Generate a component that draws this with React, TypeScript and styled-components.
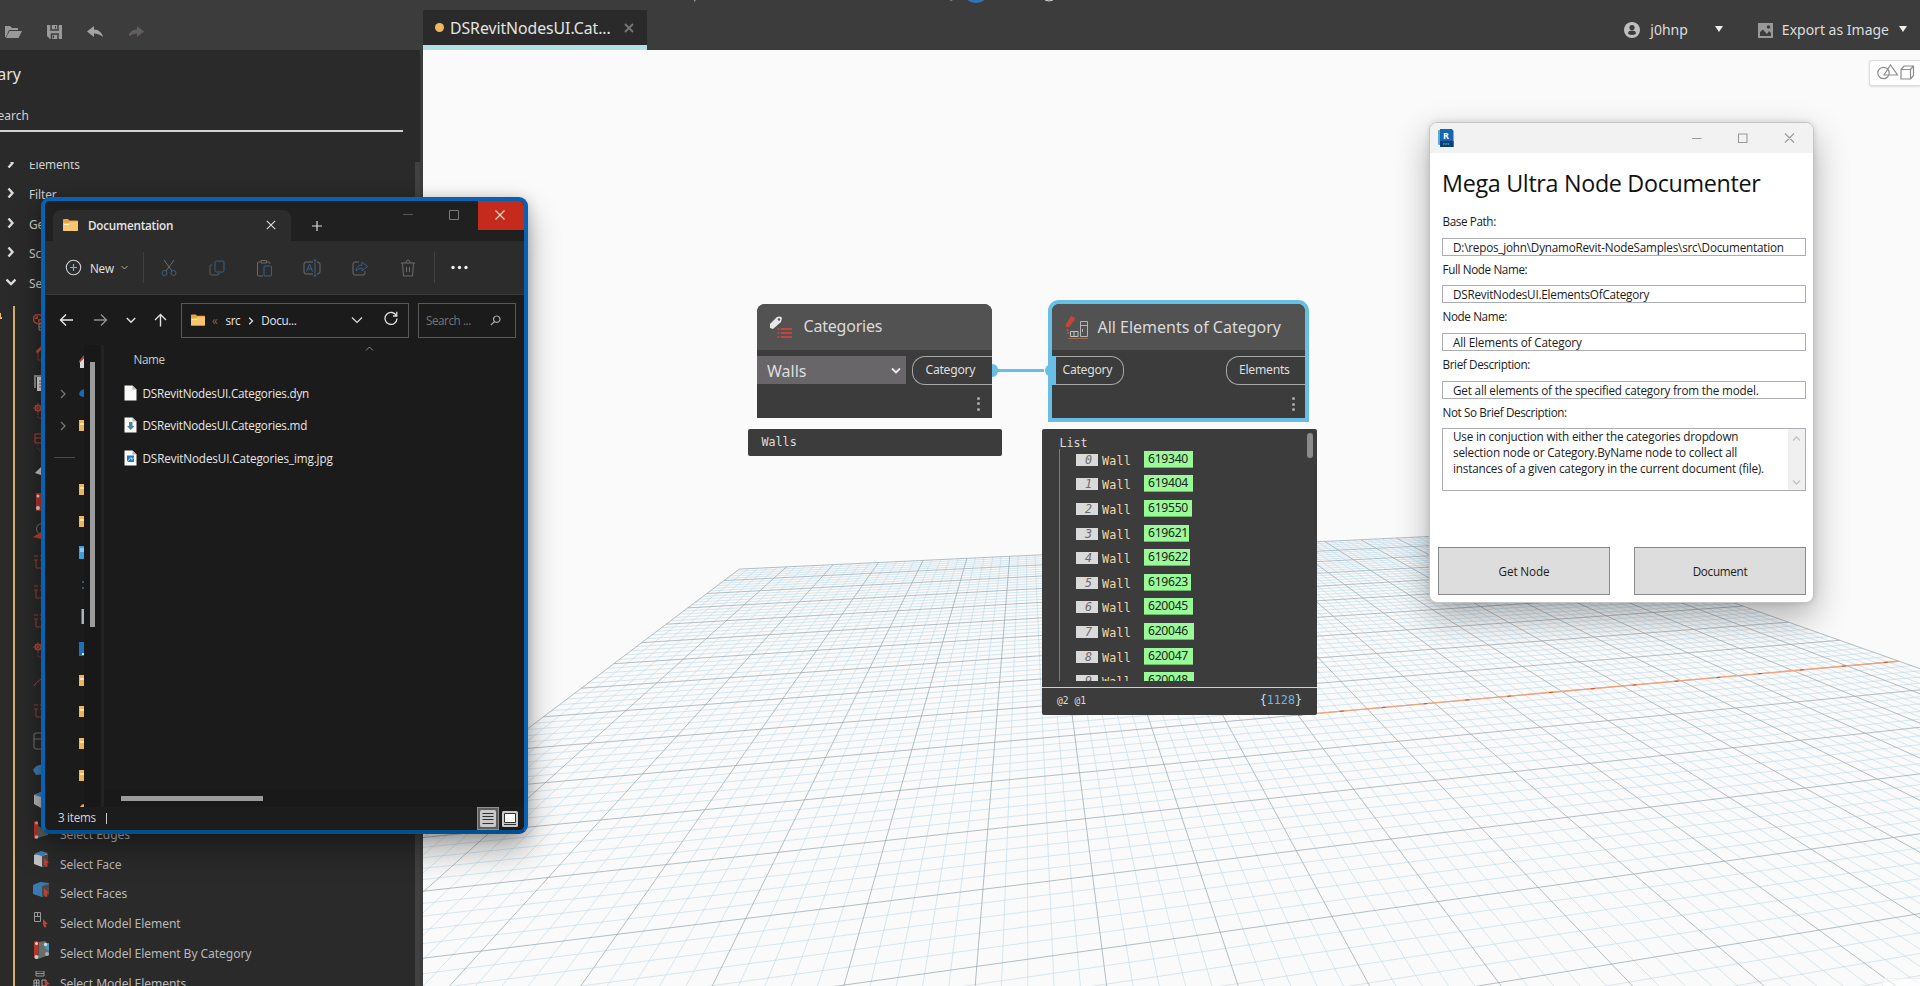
import React from "react";
import styled, { createGlobalStyle } from "styled-components";

const GlobalStyle = createGlobalStyle`
  html, body { margin: 0; padding: 0; background: #3c3c3c; overflow: hidden; }
  * { box-sizing: border-box; }
`;

const UI = `"Noto Sans", sans-serif`;
const WIN = `"Open Sans", "Noto Sans", sans-serif`;
const MONO = `"DejaVu Sans Mono", monospace`;

const Page = styled.div`
  position: relative;
  display: flex;
  flex-direction: column;
  width: 1920px;
  height: 986px;
  overflow: hidden;
  font-family: ${UI};
  background: #3c3c3c;
`;

/* ---------- top bar ---------- */
const TopBar = styled.header`
  display: flex;
  height: 50px;
  flex: none;
  background: #3c3c3c;
  position: relative;
`;
const TitleRemnant = styled.svg`
  position: absolute;
  left: 690px;
  top: 0;
`;
const Tools = styled.div`
  display: flex;
  align-items: flex-start;
  gap: 24px;
  width: 423px;
  padding: 24px 0 0 5px;
  svg { display: block; flex: none; }
`;
const DocTab = styled.div`
  display: flex;
  align-items: center;
  width: 224px;
  height: 40px;
  margin-top: 10px;
  padding: 0 13px 0 12px;
  border-bottom: 5px solid #b0e0e4;
  background: #2a2a2a;
  color: #e4e4e4;
  font-size: 15.8px;
  letter-spacing: -0.05px;
  white-space: nowrap;
`;
const Dot = styled.i`
  width: 9px;
  height: 9px;
  margin-right: 6px;
  border-radius: 50%;
  background: #f2b65f;
`;
const TabTitle = styled.span`flex: 1;`;
const Account = styled.div`
  display: flex;
  align-items: center;
  margin-left: auto;
  height: 60px;
  padding-right: 13px;
  color: #dcdcdc;
  font-size: 14px;
  white-space: nowrap;
`;
const AccountText = styled.span<{ $left: number; $right: number; $up?: number }>`
  padding: 0 ${p => p.$right}px ${p => p.$up ?? 0}px ${p => p.$left}px;
`;
const Triangle = styled.i<{ $gap?: number }>`
  border: 4px solid transparent;
  border-top: 6px solid #eee;
  border-bottom: 0;
  margin-right: ${p => p.$gap ?? 0}px;
  margin-bottom: 2px;
`;

/* ---------- library ---------- */
const Body = styled.div`
  display: flex;
  flex: 1;
  min-height: 0;
`;
const Sidebar = styled.aside`
  display: flex;
  flex-direction: column;
  width: 420px;
  margin-right: 3px;
  background: #2a2a2a;
  overflow: hidden;
`;
const CutLeft = styled.div<{ $w: number; $h: number; $line: number; $size: number; $color: string }>`
  display: flex;
  justify-content: flex-end;
  width: ${p => p.$w}px;
  height: ${p => p.$h}px;
  line-height: ${p => p.$line}px;
  font-size: ${p => p.$size}px;
  color: ${p => p.$color};
  overflow: hidden;
`;
const SearchLine = styled.div`
  width: 403px;
  height: 2px;
  background: #d2d2d2;
`;
const Scroller = styled.div`
  display: flex;
  flex: 1;
  min-height: 0;
  margin-top: 30px;
  overflow: hidden;
`;
const Tree = styled.div`
  flex: 1;
  margin-top: -12.5px;
`;
const SideScroll = styled.div`
  width: 5px;
  background: #414141;
`;
const Group = styled.div`
  display: flex;
  align-items: center;
  height: 29.7px;
  padding-left: 6px;
  gap: 13px;
  font-size: 11.9px;
  letter-spacing: -0.1px;
  color: #d0d0d0;
  svg { flex: none; position: relative; top: -1px; }
`;
const Branch = styled.div`
  display: flex;
  margin-top: 8.5px;
`;
const BranchRule = styled.div`
  width: 2px;
  margin-left: 10.5px;
  background: #d9ae6a;
`;
const BranchCaret = styled.i`
  width: 2px;
  height: 8px;
  margin-top: 5px;
  background: linear-gradient(75deg, #f2b65f 50%, transparent 50%);
`;
const Leaves = styled.div`
  padding: 5.6px 0 0 18.5px;
`;
const Leaf = styled.div`
  display: flex;
  align-items: center;
  gap: 9px;
  height: 29.85px;
  font-size: 12.1px;
  letter-spacing: -0.08px;
  white-space: nowrap;
  color: #b9b9b9;
  svg { flex: none; position: relative; top: -4px; }
`;

/* ---------- canvas ---------- */
const Canvas = styled.main`
  position: relative;
  width: 1497px;
  flex: none;
  background: #fafafa;
  overflow: hidden;
`;
const GridLayer = styled.svg`
  position: absolute;
  inset: 0;
`;
const ViewToggle = styled.div`
  position: absolute;
  right: 0;
  top: 10px;
  width: 51px;
  height: 26px;
  padding: 3px 0 0 7px;
  border: 1px solid #dedede;
  border-right: 0;
  border-radius: 3px 0 0 3px;
  background: #fff;
  box-shadow: 0 1px 2px rgba(0, 0, 0, .12);
`;
const NavHint = styled.div`
  position: absolute;
  right: 0;
  bottom: 0;
  width: 38px;
  height: 8px;
  border: 1px solid #f0f0f0;
  border-width: 1px 0 0 1px;
  border-radius: 3px 0 0 0;
  background: rgba(255, 255, 255, .5);
`;
const Node = styled.section<{ $x: number; $y: number; $w: number; $selected?: boolean }>`
  position: absolute;
  left: ${p => p.$x}px;
  top: ${p => p.$y}px;
  width: ${p => p.$w}px;
  border-radius: ${p => (p.$selected ? "11px 11px 0 0" : "8px 8px 0 0")};
  ${p => p.$selected && "border: 4px solid #68bfe6;"}
  background: #3c3c3c;
`;
const NodeHead = styled.div<{ $gap: number; $left: number }>`
  display: flex;
  align-items: center;
  gap: ${p => p.$gap}px;
  height: 46px;
  padding-left: ${p => p.$left}px;
  border-radius: 8px 8px 0 0;
  background: #525252;
  color: #dadada;
  font-size: 16px;
  white-space: nowrap;
  svg { flex: none; }
`;
const NodeTitle = styled.span<{ $ls: number }>`
  padding-bottom: 1px;
  letter-spacing: ${p => p.$ls}px;
`;
const Ports = styled.div`
  display: flex;
  justify-content: space-between;
  align-items: flex-start;
  padding-top: 6px;
  height: 40px;
`;
const PortBar = styled.i`
  width: 4px;
  height: 29px;
  background: #68bfe6;
`;
const InPorts = styled.div`display: flex;`;
const Port = styled.div<{ $w: number; $side: "in" | "out" }>`
  width: ${p => p.$w}px;
  height: 29px;
  line-height: 26px;
  border: 1px solid #a8a8a8;
  ${p => p.$side === "out"
    ? "border-right: 0; border-radius: 13px 0 0 13px; padding-left: 12.5px;"
    : "border-left: 0; border-radius: 0 13px 13px 0; padding-left: 6.5px;"}
  color: #dedede;
  font-size: 12.2px;
  letter-spacing: -0.28px;
`;
const Dropdown = styled.div`
  display: flex;
  align-items: center;
  justify-content: space-between;
  width: 149px;
  height: 28px;
  margin-top: 0.5px;
  padding: 1px 5px 0 10px;
  background: #686668;
  color: #dedede;
  font-size: 16px;
`;
const NodeFoot = styled.div<{ $right: number }>`
  display: flex;
  flex-direction: column;
  align-items: flex-end;
  gap: 2.5px;
  height: 28px;
  padding: 7px ${p => p.$right}px 0 0;
  i { width: 3px; height: 3px; border-radius: 50%; background: #a9a9a9; }
`;
const Wire = styled.svg`
  position: absolute;
  left: 569px;
  top: 310px;
`;
const Watch = styled.div<{ $x: number; $w: number }>`
  position: absolute;
  left: ${p => p.$x}px;
  top: 378.6px;
  width: ${p => p.$w}px;
  border-radius: 2px;
  background: #3c3c3c;
  color: #dcdcdc;
  font-family: ${MONO};
  font-size: 11.7px;
`;
const WatchValue = styled.div`
  height: 27px;
  line-height: 27.5px;
  padding-left: 14px;
`;
const WatchList = styled.div`
  position: relative;
  height: 252px;
  padding-left: 17px;
  overflow: hidden;
`;
const ListName = styled.div`
  height: 20px;
  line-height: 28px;
  padding-left: 0.5px;
`;
const ListRows = styled.div`
  height: 232px;
  border-left: 1px solid #7c7c7c;
  overflow: hidden;
`;
const ListRow = styled.div`
  display: flex;
  align-items: flex-start;
  height: 24.65px;
  padding: 2px 0 0 16px;
`;
const Index = styled.span`
  width: 22px;
  height: 12px;
  margin-top: 3px;
  padding-right: 6px;
  line-height: 12px;
  text-align: right;
  font-style: italic;
  background: #dadada;
  color: #6a6a6a;
`;
const TypeName = styled.span`
  width: 42px;
  margin-left: 4px;
  height: 23px;
  line-height: 20px;
  letter-spacing: 0.2px;
  color: #f3d9a4;
`;
const Id = styled.span<{ $w: number }>`
  width: ${p => p.$w}px;
  height: 17px;
  line-height: 15px;
  padding-left: 4px;
  border-bottom: 1px solid #6fb76f;
  background: #98fb98;
  color: #222;
  font-family: ${UI};
  font-size: 12.2px;
  letter-spacing: -0.3px;
`;
const ListThumb = styled.i`
  position: absolute;
  top: 4.5px;
  right: 4px;
  width: 6px;
  height: 25px;
  border-radius: 3px;
  background: #8b8b8b;
`;
const WatchFoot = styled.div`
  display: flex;
  justify-content: space-between;
  align-items: center;
  height: 28px;
  margin-top: 6px;
  padding: 0 15px 2px;
  border-top: 1px solid #cfcfcf;
  b { font-weight: 400; color: #6ab8e4; }
  small { font-size: 9.7px; }
`;

/* ---------- documenter dialog ---------- */
const Dialog = styled.section`
  position: absolute;
  left: 1429px;
  top: 122px;
  width: 385px;
  height: 481px;
  border: 1px solid #c4c4c4;
  border-radius: 8px;
  background: #fff;
  box-shadow: 0 14px 34px rgba(0, 0, 0, .3), 0 0 6px rgba(0, 0, 0, .12);
  font-family: ${WIN};
  font-size: 11.7px;
  letter-spacing: -0.22px;
  color: #1c1c1c;
  overflow: hidden;
`;
const DialogClip = styled.div`
  display: flex;
  flex-direction: column;
  height: 100%;
`;
const DialogBar = styled.div`
  display: flex;
  justify-content: space-between;
  height: 30px;
  padding: 5.5px 18px 0 7.5px;
  background: #f2f2f2;
`;
const DialogTitle = styled.h1`
  margin: 0;
  height: 55px;
  padding: 5px 0 0 12px;
  line-height: 51px;
  font-size: 23.3px;
  font-weight: 400;
  letter-spacing: -0.31px;
  color: #111;
  white-space: nowrap;
`;
const Field = styled.label`
  display: block;
  padding: 0 7px 0 12px;
`;
const FieldLabel = styled.span`
  display: block;
  height: 29.7px;
  line-height: 26.5px;
  padding-left: 0.5px;
  letter-spacing: -0.38px;
`;
const Input = styled.span<{ $ls?: number }>`
  display: block;
  height: 18px;
  line-height: 16.5px;
  padding-left: 10px;
  border: 1px solid #abadb3;
  letter-spacing: ${p => p.$ls ?? -0.2}px;
  white-space: nowrap;
`;
const TextArea = styled.span`
  display: flex;
  justify-content: space-between;
  height: 63px;
  padding-left: 10px;
  border: 1px solid #abadb3;
  line-height: 15.8px;
  letter-spacing: -0.18px;
  white-space: pre;
`;
const AreaScroll = styled.span`
  display: flex;
  flex-direction: column;
  justify-content: space-between;
  align-items: center;
  width: 17px;
  padding: 6px 0 4px;
  background: #f0f0f0;
`;
const Buttons = styled.div`
  display: flex;
  justify-content: space-between;
  margin-top: 56px;
  padding: 0 7px 0 8px;
`;
const PushButton = styled.div<{ $ls: number }>`
  width: 172px;
  height: 48px;
  line-height: 46px;
  border: 1px solid #8a8a8a;
  background: #ddd;
  text-align: center;
  letter-spacing: ${p => p.$ls}px;
`;

/* ---------- file explorer ---------- */
const Explorer = styled.section`
  position: absolute;
  left: 41px;
  top: 197px;
  width: 487px;
  height: 637px;
  border: 4px solid #0763b1;
  border-bottom-color: #04508f;
  border-radius: 9px;
  background: #1b1b1b;
  box-shadow: 0 16px 32px rgba(0, 0, 0, .32), 0 2px 14px rgba(0, 0, 0, .2);
  font-family: ${WIN};
  font-size: 11.7px;
  letter-spacing: -0.22px;
  color: #e6e6e6;
  white-space: nowrap;
`;
const ExplorerClip = styled.div`
  display: flex;
  flex-direction: column;
  height: 100%;
  border-radius: 5px;
  overflow: hidden;
`;
const TabStrip = styled.div`
  display: flex;
  height: 40px;
  flex: none;
  padding-left: 8px;
  background: #202020;
`;
const ExplorerTab = styled.div`
  display: flex;
  align-items: center;
  width: 238px;
  height: 31px;
  margin-top: 9px;
  padding: 0 15.5px 1.5px 10px;
  border-radius: 8px 8px 0 0;
  background: #2c2c2c;
  font-weight: 600;
  letter-spacing: -0.23px;
  span { flex: 1; margin-left: 10px; }
`;
const NewTab = styled.div`
  padding: 20px 0 0 21px;
  line-height: 0;
`;
const Caption = styled.div`
  display: flex;
  margin-left: auto;
  height: 29px;
`;
const CaptionButton = styled.div<{ $bg?: string }>`
  display: flex;
  align-items: center;
  justify-content: center;
  width: 46px;
  padding: 0 2px 1px 0;
  background: ${p => p.$bg ?? "transparent"};
`;
const CommandBar = styled.div`
  display: flex;
  align-items: center;
  height: 54px;
  flex: none;
  padding-left: 20px;
  border-bottom: 1px solid #3a3a3a;
  background: #2c2c2c;
`;
const NewLabel = styled.span`
  margin: 0 7px 0 8px;
  font-weight: 500;
`;
const Divider = styled.i<{ $l: number; $r: number }>`
  width: 1px;
  height: 31px;
  margin: 0 ${p => p.$r}px 0 ${p => p.$l}px;
  background: #404040;
`;
const Commands = styled.div`
  display: flex;
  gap: 29.8px;
  svg { display: block; }
`;
const AddressBar = styled.div`
  display: flex;
  align-items: center;
  height: 50px;
  flex: none;
  padding-left: 14px;
`;
const Arrows = styled.div`
  display: flex;
  align-items: center;
  gap: 18px;
  width: 122px;
`;
const PathBox = styled.div`
  display: flex;
  align-items: center;
  width: 228px;
  height: 35px;
  padding: 0 10.5px 1px 9px;
  border: 1px solid #585858;
  letter-spacing: -0.35px;
`;
const PathPart = styled.span<{ $l: number; $grow?: boolean; $c?: string }>`
  margin-left: ${p => p.$l}px;
  ${p => p.$grow && "flex: 1;"}
  color: ${p => p.$c ?? "#e6e6e6"};
`;
const SearchBox = styled.div`
  display: flex;
  align-items: center;
  justify-content: space-between;
  width: 98px;
  height: 35px;
  margin-left: 9px;
  padding: 0 14px 0 7px;
  border: 1px solid #585858;
  color: #757575;
  letter-spacing: -0.45px;
`;
const Panes = styled.div`
  display: flex;
  flex: 1;
  min-height: 0;
`;
const NavPane = styled.div`
  width: 39px;
  padding-left: 9px;
  overflow: hidden;
`;
const NavItem = styled.div<{ $h?: number }>`
  display: flex;
  align-items: center;
  height: ${p => p.$h ?? 31.8}px;
  width: 60px;
  svg { flex: none; }
`;
const NavChevron = styled.span`
  display: flex;
  width: 25px;
  padding-left: 5.5px;
`;
const NavRule = styled.i`
  width: 21px;
  height: 1px;
  background: #4a4a4a;
`;
const NavTrack = styled.div`
  width: 17px;
  padding: 17px 0 0 6px;
  background: #181818;
`;
const NavThumb = styled.div`
  width: 5px;
  height: 265px;
  background: #9b9b9b;
`;
const Splitter = styled.div`
  width: 3px;
  background: #232323;
`;
const FilePane = styled.div`
  display: flex;
  flex-direction: column;
  flex: 1;
`;
const HeadRow = styled.div`
  display: flex;
  height: 31.7px;
  padding-left: 29.5px;
  line-height: 28px;
  color: #c8c8c8;
  letter-spacing: -0.4px;
  span { width: 231px; }
`;
const FileRow = styled.div<{ $ls: number }>`
  display: flex;
  align-items: center;
  gap: 5.5px;
  height: 32.5px;
  padding-left: 20px;
  letter-spacing: ${p => p.$ls}px;
`;
const HTrack = styled.div`
  display: flex;
  height: 17px;
  margin-top: auto;
  padding: 6px 0 0 17px;
  background: #191919;
`;
const HThumb = styled.div`
  width: 142px;
  height: 5px;
  background: #9b9b9b;
`;
const StatusBar = styled.div`
  display: flex;
  align-items: center;
  height: 23px;
  flex: none;
  padding: 0 3.5px 0 13px;
  color: #d6d6d6;
  background: #1c1c1c;
  letter-spacing: -0.3px;
`;
const StatusText = styled.span`padding-bottom: 2.5px;`;
const StatusRule = styled.i`
  width: 1px;
  height: 11px;
  margin: 0 auto 0 10px;
  background: #c8c8c8;
`;
const ViewButton = styled.div<{ $on?: boolean }>`
  display: flex;
  align-items: center;
  justify-content: center;
  width: 22px;
  height: 23px;
  ${p => p.$on && "background: #5f5f5f; border: 1px solid #8f8f8f;"}
`;

/* ---------- glyphs ---------- */
const Stroke = ({ d, w, h, c, s = 1 }: { d: string; w: number; h: number; c: string; s?: number }) => (
  <svg width={w} height={h} viewBox={`0 0 ${w} ${h}`} fill="none" stroke={c} strokeWidth={s}>
    <path d={d} />
  </svg>
);

const Folder = ({ w = 15 }: { w?: number }) => (
  <svg width={w} height="12" viewBox="0 0 15 12">
    <path d="M0 1Q0 0 1 0H5L6.5 1.5H14Q15 1.5 15 2.5V11Q15 12 14 12H1Q0 12 0 11Z" fill="#e8a33f" />
    <path d="M0 4H5.5L7 2.6H15V11Q15 12 14 12H1Q0 12 0 11Z" fill="#f7c66f" />
    <path d="M1 5.5H6" stroke="#fff0cc" />
  </svg>
);

const FileIcon = ({ kind }: { kind: "plain" | "md" | "img" }) => (
  <svg width="13" height="16" viewBox="0 0 13 16">
    <path d="M.5.5H8.5L12.5 4.5V15.5H.5Z" fill="#fbfbf8" />
    <path d="M8.5.5V4.5H12.5Z" fill="#b5b5b5" />
    {kind === "md" && <path d="M5 5H8.5V9H10.5L6.7 13 3 9H5Z" fill="#4d7fa3" />}
    {kind === "img" && (
      <>
        <path d="M3 5.5H10V12H3Z" fill="#1f7ac6" />
        <path d="M3 12L7 7.5 8 9.5 10 7.5" stroke="#bfe3fa" fill="none" />
      </>
    )}
  </svg>
);

const LIB_ICONS: Record<string, React.ReactNode> = {
  globe: <><circle cx="5" cy="5" r="4.5" fill="none" stroke="#b8473a" strokeWidth="1.5" /><path d="M1 5H5V1M5 9V5H9" fill="#b8473a" /><path d="M6 10H10M6 13H10M6 10V16H10" stroke="#999" fill="none" /></>,
  roof: <><path d="M3 7L9 1V5L4 10Z" fill="#b8473a" /><path d="M5 9V16H10" stroke="#7a3c34" fill="none" /></>,
  page: <><path d="M1 1H12V3H3V14H1Z" fill="#8a8a8a" /><path d="M4 3H14V17H4Z" fill="#ddd" /><path d="M6 7H10M6 10H10M6 13H10" stroke="#a55" /></>,
  gear: <><circle cx="5" cy="5" r="2.8" fill="none" stroke="#b8473a" strokeWidth="1.5" /><path d="M5 0V10M0 5H10M2 2L8 8M8 2L2 8" stroke="#b8473a" strokeWidth=".7" /><path d="M5 10V15H10" stroke="#7a3c34" fill="none" strokeDasharray="2 1" /></>,
  table: <><path d="M2 1H9V10H2ZM2 5H9" stroke="#b8473a" fill="none" /><path d="M5 12V17H12" stroke="#7a3c34" fill="none" strokeDasharray="1 2" /></>,
  tag: <path d="M2 10L8 4H14L8 12Z" fill="#ccc" />,
  link: <><path d="M3 0H9V18H3Z" fill="#b8352a" /><circle cx="5" cy="3" r="1.5" fill="#ddd" /><circle cx="5" cy="15" r="2" fill="#ddd" /></>,
  pick: <><circle cx="9" cy="6" r="5.5" fill="none" stroke="#777" /><path d="M0 14L8 9V16Z" fill="#c2402f" /></>,
  grid: <path d="M1 3H5M7 3H14M1 7H5M7 7H14M3 7V15H12" stroke="#9a4336" fill="none" />,
  curve: <path d="M1 14Q6 6 14 6" stroke="#b8473a" fill="none" />,
  box: <path d="M1 3Q1 1 3 1H14V17H3Q1 17 1 15ZM1 7H14" stroke="#777" fill="none" />,
  surf: <path d="M0 8Q3 2 12 3L14 12 3 13Z" fill="#3f7fb5" />,
  cube: <><path d="M1 4L8 1 16 3V13L8 17 1 13Z" fill="#bcbcbc" /><path d="M1 4L8 1 16 3 8 6Z" fill="#3f7fb5" /></>,
  edges: <><path d="M1 1Q3-1 5 1L6 13 4 18 1 17Z" fill="#b8352a" /><path d="M5 5L15 10 15 14 4 17Z" fill="#5b625e" /><circle cx="3.500" cy="2" r="1.500" fill="#d99" /><circle cx="3.500" cy="16" r="1.800" fill="#bbb" /></>,
  face: <><path d="M1 4L8 1 15 3V14L9 16 1 13Z" fill="#c4c4c4" /><path d="M1 3L8 0 15 2 9 5Z" fill="#3f7fb5" /><path d="M9 5L15 3V14L9 16Z" fill="#4a4a4a" /><path d="M11 7L16 12 13.5 12 14.5 15.5 12.5 16 11 13Z" fill="#c2402f" /></>,
  faces: <><path d="M0 4L7 1 16 2V13L9 16 0 13Z" fill="#3a7ab3" /><path d="M9 5L16 3V14L9 16Z" fill="#4a4a4a" /><path d="M11 7L16 12 13.5 12 14.5 15.5 12.5 16 11 13Z" fill="#c2402f" /></>,
  model: <><path d="M1.500 1.500H7.500V10.500H1.500ZM1.500 5.500H7.500M4.500 1.500V5.500" stroke="#999" fill="none" /><path d="M10 8L15 13 12.500 13 13.500 16 11.500 16.500 10 13.500Z" fill="#c2402f" /></>,
  bycat: <><path d="M6 1L12 0 16 4V14L5 18Z" fill="#66706a" /><path d="M1 1Q3-1 6 1L5 12 3 18 1 17Z" fill="#b8352a" /><path d="M11 2H16V10L13 8Z" fill="#4b94c4" /><circle cx="3.500" cy="2.500" r="1.500" fill="#e6cfcb" /><circle cx="12.500" cy="3.500" r="1.700" fill="#bfe0f2" /><circle cx="3.500" cy="16" r="2" fill="#ccc" /><circle cx="14" cy="13" r="2" fill="#aaa" /></>,
  models: <><path d="M3 0H11V5H3ZM3 2.500H11" stroke="#999" fill="none" /><path d="M1 9H6V15H1ZM1 12H6M3.500 9V15M9 9H13V15H9Z" stroke="#aaa" fill="none" /><path d="M11 8L17 13 14 14 13 17Z" fill="#c2402f" /></>,
};

const LEAVES: [string, string?][] = [
  ["globe"], ["roof"], ["page"], ["gear"], ["table"], ["tag"], ["link"], ["pick"], ["grid"], ["grid"], ["grid"],
  ["gear"], ["curve"], ["grid"], ["box"], ["surf"], ["cube"],
  ["edges", "Select Edges"], ["face", "Select Face"], ["faces", "Select Faces"], ["model", "Select Model Element"],
  ["bycat", "Select Model Element By Category"], ["models", "Select Model Elements"],
];

const NAV_FOLDER = <><path d="M0 2H5V13H0Z" fill="#f0b357" /><path d="M1 5H5V7H1Z" fill="#fbe3b0" /></>;
const NAV_ITEMS: React.ReactNode[] = [
  <><path d="M1 8L5 4V14H1Z" fill="#d9d9d9" /><path d="M0 7L5 1V4L0 9Z" fill="#c8402f" /></>,
  <path d="M0 8Q1 4 5 3V11Q1 11 0 8Z" fill="#0f6cc0" />,
  NAV_FOLDER,
  null,
  NAV_FOLDER,
  NAV_FOLDER,
  <><path d="M0 1H5V14H0Z" fill="#3b9fdc" /><path d="M1 4H5M1 6H5" stroke="#d4ecf8" /></>,
  <path d="M3 5H5M3 11H5" stroke="#5a8fb5" />,
  <path d="M2.500 0H5V15H2.500Z" fill="#a9b4bd" />,
  <><path d="M0 1H5V15H0Z" fill="#1e6fc0" /><path d="M3 13H5" stroke="#d4ecf8" strokeWidth="2" /></>,
  NAV_FOLDER,
  NAV_FOLDER,
  NAV_FOLDER,
  NAV_FOLDER,
  <path d="M0 9Q2 4 5 4V14H0Z" fill="#e8a75a" />,
];

const IDS: [string, number][] = [
  ["619340", 48.5], ["619404", 48.5], ["619550", 48], ["619621", 45], ["619622", 46],
  ["619623", 47], ["620045", 49], ["620046", 50], ["620047", 48.5], ["620048", 50],
];

/* ---------- ground plane ---------- */
type Pair = [number, number];
const ANCHORS: [Pair, Pair][] = [
  [[0, 0], [740, 569]],
  [[6, 0], [1009.7, 556.3]],
  [[0, 3], [686.3, 608.3]],
  [[0, 8], [544, 716.3]],
  [[6, 14], [977, 966.7]],
  [[20, 7], [1743, 606]],
  [[20, 10], [1898.6, 661.3]],
];

/* Least-squares projective fit from plane cells to canvas pixels. */
function fitPlane(anchors: [Pair, Pair][]): number[] {
  const rows: number[][] = [];
  anchors.forEach(([[i, j], [x, y]]) => {
    const X = x / 1000, Y = y / 1000;
    rows.push([i, j, 1, 0, 0, 0, -i * X, -j * X, X]);
    rows.push([0, 0, 0, i, j, 1, -i * Y, -j * Y, Y]);
  });
  const m = Array.from({ length: 8 }, (_, a) =>
    Array.from({ length: 9 }, (_, b) => rows.reduce((sum, r) => sum + r[a] * r[b], 0)));
  for (let c = 0; c < 8; c++) {
    let p = c;
    for (let r = c + 1; r < 8; r++) if (Math.abs(m[r][c]) > Math.abs(m[p][c])) p = r;
    [m[c], m[p]] = [m[p], m[c]];
    for (let r = 0; r < 8; r++) {
      if (r === c) continue;
      const f = m[r][c] / m[c][c];
      for (let k = c; k < 9; k++) m[r][k] -= f * m[c][k];
    }
  }
  return m.map((r, a) => r[8] / r[a]);
}
const H = fitPlane(ANCHORS);
const depth = ([i, j]: Pair) => H[6] * i + H[7] * j + 1;
const project = (p: Pair): string => {
  const w = depth(p);
  const x = ((H[0] * p[0] + H[1] * p[1] + H[2]) / w) * 1000;
  const y = ((H[3] * p[0] + H[4] * p[1] + H[5]) / w) * 1000;
  return `${x.toFixed(1)} ${y.toFixed(1)}`;
};
function segment(a: Pair, b: Pair): string {
  const near = 0.08;
  const wa = depth(a), wb = depth(b);
  if (wa < near && wb < near) return "";
  const at = (t: number): Pair => [a[0] + (b[0] - a[0]) * t, a[1] + (b[1] - a[1]) * t];
  const cut = (near - wa) / (wb - wa);
  return `M${project(wa < near ? at(cut) : a)}L${project(wb < near ? at(cut) : b)}`;
}
const planeLines = (major: boolean) => {
  let d = "";
  for (let k = 0; k <= 100; k++) {
    if ((k % 5 === 0) !== major) continue;
    const v = k / 5;
    d += segment([v, 0], [v, 20]) + segment([0, v], [20, v]);
  }
  return d;
};

const Ground = () => (
  <GridLayer width="1497" height="936" viewBox="423 50 1497 936" fill="none">
    <path d={planeLines(false)} stroke="#bcd8e8" strokeOpacity=".6" />
    <path d={planeLines(true)} stroke="#9aa9b2" strokeOpacity=".75" />
    <path d={segment([10, 10], [20, 10])} stroke="#f2a27c" strokeWidth="1.4" />
    <path d={segment([10, 10], [20, 10])} stroke="#c8502c" strokeDasharray="4 38" />
  </GridLayer>
);

const Chevron = ({ open }: { open?: boolean }) => open
  ? <Stroke w={10} h={10} d="M.500 2.500L5 7 9.500 2.500" c="#dcdcdc" s={2.4} />
  : <Stroke w={10} h={10} d="M2.500 .500L6.500 5 2.500 9.500" c="#dcdcdc" s={2.4} />;

export default function App() {
  return (
    <Page>
      <GlobalStyle />
      <TopBar>
        <TitleRemnant width="370" height="4" viewBox="0 0 370 4">
          <path d="M4 0H6L4 2Z M260 0H263L261 1Z" fill="#999" />
          <ellipse cx="286" cy="-2" rx="9" ry="5" fill="#2f74b5" />
          <path d="M355 0Q359 2 363 0" stroke="#ddd" fill="none" />
        </TitleRemnant>
        <Tools>
          <svg width="18" height="16" viewBox="0 0 18 16" fill="#999"><path d="M0 13V2H5L7 4H13V6H4L1 13Z M4.500 7H17L13.500 14H1Z" /></svg>
          <svg width="16" height="16" viewBox="0 0 16 16"><path d="M0 1H15V15H3L0 12Z" fill="#999" /><path d="M4 1V6H11V1M4.500 15V10H11V15" stroke="#3c3c3c" strokeWidth="1.500" fill="none" /><path d="M8.500 2V4.500M6.500 11.500V14" stroke="#3c3c3c" /></svg>
          <svg width="18" height="16" viewBox="0 0 18 16"><path d="M0 7.500L7 2V5.500Q14 5.500 16 13Q12 9.500 7 9.500V13Z" fill="#a3a3a3" /></svg>
          <svg width="18" height="16" viewBox="0 0 18 16"><path d="M15 7.500L8 2V5.500Q1 5.500 -1 13Q3 9.500 8 9.500V13Z" fill="#625e5e" /></svg>
        </Tools>
        <DocTab>
          <Dot />
          <TabTitle>DSRevitNodesUI.Cat...</TabTitle>
          <Stroke w={10} h={10} d="M1 1L9 9M9 1L1 9" c="#777" s={1.8} />
        </DocTab>
        <Account>
          <svg width="16" height="16" viewBox="0 0 16 16"><circle cx="8" cy="8" r="8" fill="#bfbfbf" /><circle cx="8" cy="5.500" r="2.600" fill="#3c3c3c" /><path d="M4.200 12V10.500Q4.500 8.500 8 8.500Q11.500 8.500 11.800 10.500V12Q8 14 4.200 12Z" fill="#3c3c3c" /></svg>
          <AccountText $left={10} $right={27} $up={2}>j0hnp</AccountText>
          <Triangle $gap={35} />
          <svg width="15" height="15" viewBox="0 0 15 15"><path d="M0 0H15V15H0Z" fill="#999" /><path d="M2 13V9L5 6.500 7.500 9.500 9 11 11 8 13 10V13Z" fill="#3c3c3c" /><circle cx="10.500" cy="4" r="1.800" fill="#3c3c3c" /></svg>
          <AccountText $left={9} $right={10} $up={1.5}>Export as Image</AccountText>
          <Triangle />
        </Account>
      </TopBar>

      <Body>
        <Sidebar>
          <CutLeft $w={21} $h={49} $line={49} $size={16} $color="#e2e2e2">Library</CutLeft>
          <CutLeft $w={29} $h={31} $line={34} $size={12} $color="#cfcfcf">Search</CutLeft>
          <SearchLine />
          <Scroller>
            <Tree>
              <Group><Chevron />Elements</Group>
              <Group><Chevron />Filter</Group>
              <Group><Chevron />Geometry</Group>
              <Group><Chevron />Schedules</Group>
              <Group><Chevron open />Selection</Group>
              <Branch>
                <BranchCaret />
                <BranchRule />
                <Leaves>
                  {LEAVES.map(([icon, label], n) => (
                    <Leaf key={n}>
                      <svg width="18" height="18" viewBox="0 0 18 18">{LIB_ICONS[icon]}</svg>
                      {label}
                    </Leaf>
                  ))}
                </Leaves>
              </Branch>
            </Tree>
            <SideScroll />
          </Scroller>
        </Sidebar>

        <Canvas>
          <Ground />
          <ViewToggle>
            <svg width="42" height="17" viewBox="0 0 42 17" fill="none" stroke="#8c8c8c" strokeWidth="1.200">
              <circle cx="6.500" cy="9" r="5.700" /><path d="M7 11L13.500 1 20.500 11Z" />
              <path d="M24 5.500H33.500V15H24ZM24 5.500L27 2H36.500V11.500L33.500 15M33.500 5.500L36.500 2" />
            </svg>
          </ViewToggle>
          <NavHint />

          <Node $x={334} $y={253.6} $w={235}>
            <NodeHead $gap={10.5} $left={11}>
              <svg width="25" height="24" viewBox="0 0 25 24">
                <path d="M2 9L9 2Q13 .500 14 3L13 7 5 14 2 13Z" fill="#e8e8e8" /><circle cx="11" cy="4.500" r="1.200" fill="#525252" />
                <path d="M13 14H24M13 18H24M13 22H24" stroke="#c2473a" strokeWidth="2" /><path d="M9.500 14H11.500M9.500 18H11.500M9.500 22H11.500" stroke="#c2473a" strokeWidth="2" />
              </svg>
              <NodeTitle $ls={-0.2}>Categories</NodeTitle>
            </NodeHead>
            <Ports>
              <Dropdown>Walls<Stroke w={10} h={8} d="M1 1.500L5 5.500 9 1.500" c="#eee" s={1.8} /></Dropdown>
              <Port $w={80} $side="out">Category</Port>
            </Ports>
            <NodeFoot $right={12}><i /><i /><i /></NodeFoot>
          </Node>
          <Wire width="60" height="20" viewBox="0 0 60 20" fill="#68bfe6">
            <path d="M0 4Q6 4 6 10.500Q6 17 0 17Z" /><path d="M5 9H52V12H5Z" /><circle cx="59" cy="10.500" r="6" />
          </Wire>
          <Watch $x={324.500} $w={254.5}><WatchValue>Walls</WatchValue></Watch>

          <Node $x={625} $y={250} $w={261} $selected>
            <NodeHead $gap={9} $left={12.5}>
              <svg width="24" height="24" viewBox="0 0 24 24">
                <path d="M1 9L6 1 10 3 9 6 4 12 1 12Z" fill="#c2473a" /><path d="M1.500 15H3.500M2 18H4" stroke="#c07a3a" />
                <path d="M15.500 6.500H22.500V21.500H15.500ZM15.500 10.500H22.500M17.500 14V17" stroke="#b5b5b5" fill="none" /><path d="M5.500 16.500H13V21.500H5.500ZM9 16.500V21.500" stroke="#c4c4c4" fill="none" />
                <path d="M3 23.500H23" stroke="#a5654e" />
              </svg>
              <NodeTitle $ls={-0.01}>All Elements of Category</NodeTitle>
            </NodeHead>
            <Ports>
              <InPorts><PortBar /><Port $w={67.5} $side="in">Category</Port></InPorts>
              <Port $w={79.5} $side="out">Elements</Port>
            </Ports>
            <NodeFoot $right={10.5}><i /><i /><i /></NodeFoot>
          </Node>
          <Watch $x={619} $w={275}>
            <WatchList>
              <ListName>List</ListName>
              <ListRows>
                {IDS.map(([id, w], n) => (
                  <ListRow key={id}>
                    <Index>{n}</Index>
                    <TypeName>Wall</TypeName>
                    <Id $w={w}>{id}</Id>
                  </ListRow>
                ))}
              </ListRows>
              <ListThumb />
            </WatchList>
            <WatchFoot><small>@2 @1</small><span>{"{"}<b>1128</b>{"}"}</span></WatchFoot>
          </Watch>
        </Canvas>
      </Body>

      <Dialog>
        <DialogClip>
          <DialogBar>
            <svg width="16" height="18" viewBox="0 0 16 18">
              <rect x="0" y="1" width="14" height="15" rx="1" fill="#5aa9d6" /><path d="M2 0H14L15.500 2V18H2Z" fill="#1565b3" /><path d="M2 12H15.500V18H2Z" fill="#0a3f78" />
              <text x="5" y="9.500" fontSize="9" fontWeight="700" fill="#fff">R</text><path d="M5 15H12" stroke="#9cc0e0" strokeDasharray="1.500 .800" />
            </svg>
            <Stroke w={104} h={18} d="M1 9.500H10.500M47.500 5H56V13.500H47.500ZM94 4.500L103 13.500M103 4.500L94 13.500" c="#999" s={1.1} />
          </DialogBar>
          <DialogTitle>Mega Ultra Node Documenter</DialogTitle>
          <Field><FieldLabel>Base Path:</FieldLabel><Input>D:\repos_john\DynamoRevit-NodeSamples\src\Documentation</Input></Field>
          <Field><FieldLabel>Full Node Name:</FieldLabel><Input $ls={-0.22}>DSRevitNodesUI.ElementsOfCategory</Input></Field>
          <Field><FieldLabel>Node Name:</FieldLabel><Input $ls={-0.15}>All Elements of Category</Input></Field>
          <Field><FieldLabel>Brief Description:</FieldLabel><Input $ls={-0.17}>Get all elements of the specified category from the model.</Input></Field>
          <Field>
            <FieldLabel>Not So Brief Description:</FieldLabel>
            <TextArea>
              {"Use in conjuction with either the categories dropdown\nselection node or Category.ByName node to collect all\ninstances of a given category in the current document (file)."}
              <AreaScroll>
                <Stroke w={9} h={7} d="M1 5.500L4.500 2 8 5.500" c="#c4c4c4" s={1.5} />
                <Stroke w={9} h={7} d="M1 1.500L4.500 5 8 1.500" c="#c4c4c4" s={1.5} />
              </AreaScroll>
            </TextArea>
          </Field>
          <Buttons>
            <PushButton $ls={-0.12}>Get Node</PushButton>
            <PushButton $ls={-0.3}>Document</PushButton>
          </Buttons>
        </DialogClip>
      </Dialog>

      <Explorer>
        <ExplorerClip>
          <TabStrip>
            <ExplorerTab>
              <Folder />
              <span>Documentation</span>
              <Stroke w={10} h={10} d="M.800 .800L9.200 9.200M9.200 .800L.800 9.200" c="#ddd" s={1.1} />
            </ExplorerTab>
            <NewTab><Stroke w={10} h={10} d="M5 0V10M0 5H10" c="#ddd" s={1.2} /></NewTab>
            <Caption>
              <CaptionButton><Stroke w={10} h={10} d="M0 4.500H10" c="#555" /></CaptionButton>
              <CaptionButton><Stroke w={10} h={10} d="M.500 .500H9.500V9.500H.500Z" c="#7a7a7a" /></CaptionButton>
              <CaptionButton $bg="#c42b1c"><Stroke w={10} h={10} d="M.500 .500L9.500 9.500M9.500 .500L.500 9.500" c="#f5d9c8" s={1.2} /></CaptionButton>
            </Caption>
          </TabStrip>

          <CommandBar>
            <svg width="17" height="17" viewBox="0 0 17 17" fill="none"><circle cx="8.500" cy="8.500" r="7.200" stroke="#cfcfcf" strokeWidth="1.100" /><path d="M8.500 5V12M5 8.500H12" stroke="#5cb8ea" strokeWidth="1.200" /></svg>
            <NewLabel>New</NewLabel>
            <Stroke w={7} h={5} d="M.500 1L3.500 4 6.500 1" c="#aaa" />
            <Divider $l={15} $r={16} />
            <Commands>
              <svg width="18" height="18" viewBox="0 0 18 18" fill="none" stroke="#6b6b6b"><path d="M4 1L12 12M14 1L6 12" /><circle cx="4.500" cy="14" r="2.500" stroke="#38608a" /><circle cx="13.500" cy="14" r="2.500" stroke="#38608a" /></svg>
              <svg width="18" height="18" viewBox="0 0 18 18" fill="none" stroke="#5c5c5c"><path d="M4 6H3Q2 6 2 7V15Q2 16 3 16H10Q11 16 11 14" /><rect x="7" y="2" width="9" height="11" rx="1.500" stroke="#38608a" /></svg>
              <svg width="18" height="18" viewBox="0 0 18 18" fill="none" stroke="#6b6b6b"><path d="M8 17H3.500Q2.500 17 2.500 16V4Q2.500 3 3.500 3H5.500M12 3H14Q15 3 15 4V5" /><path d="M6 1.500H11.500V4H6Z" /><rect x="9" y="7" width="7.500" height="10" rx="1" stroke="#38608a" /></svg>
              <svg width="18" height="18" viewBox="0 0 18 18" fill="none" stroke="#6b6b6b"><path d="M10 3H3Q1 3 1 5V13Q1 15 3 15H10M14 3Q17 3 17 5V13Q17 15 14 15" /><path d="M3.500 12.500L6.500 5 9.500 12.500M4.500 10H8.500M12 1V17M10.500 1H13.500M10.500 17H13.500" stroke="#38608a" /></svg>
              <svg width="18" height="18" viewBox="0 0 18 18" fill="none" stroke="#6b6b6b"><path d="M8 3H4Q2 3 2 5V14Q2 16 4 16H12Q14 16 14 14V12" /><path d="M5 12Q6 6 11 6V3L16.500 7.500 11 12V9Q8 9 5 12Z" stroke="#38608a" /></svg>
              <svg width="18" height="18" viewBox="0 0 18 18" fill="none" stroke="#6b6b6b"><path d="M2 4H16M7 4Q7 1 9 1Q11 1 11 4M3.500 4L4.500 17H13.500L14.500 4M7.500 8V13M10.500 8V13" /></svg>
            </Commands>
            <Divider $l={17} $r={16} />
            <svg width="17" height="5" viewBox="0 0 17 5" fill="#f0f0f0"><circle cx="2" cy="2.500" r="1.700" /><circle cx="8.500" cy="2.500" r="1.700" /><circle cx="15" cy="2.500" r="1.700" /></svg>
          </CommandBar>

          <AddressBar>
            <Arrows>
              <Stroke w={14} h={14} d="M14 7H1.500M7 1.500L1.500 7 7 12.500" c="#e8e8e8" s={1.4} />
              <Stroke w={17} h={14} d="M3 7H15.500M10 1.500L15.500 7 10 12.500" c="#8f8f8f" s={1.4} />
              <Stroke w={10} h={8} d="M.800 2L5 6.200 9.200 2" c="#e0e0e0" s={1.5} />
              <Stroke w={14} h={14} d="M6.500 13.500V1.500M1 7L6.500 1.500 12 7" c="#e0e0e0" s={1.4} />
            </Arrows>
            <PathBox>
              <Folder w={14} />
              <PathPart $l={7} $c="#6a6a6a">«</PathPart>
              <PathPart $l={8}>src</PathPart>
              <PathPart $l={8}><Stroke w={6} h={8} d="M1.200 .800L4.500 4 1.200 7.200" c="#ddd" s={1.3} /></PathPart>
              <PathPart $l={7} $grow>Docu...</PathPart>
              <Stroke w={12} h={8} d="M1 1.500L6 6.500 11 1.500" c="#ddd" s={1.2} />
              <PathPart $l={21}><svg width="14" height="14" viewBox="0 0 14 14" fill="none" stroke="#ddd" strokeWidth="1.300"><path d="M12.500 5A6 6 0 1 0 13 7.500M12.800 .800V5H9" /></svg></PathPart>
            </PathBox>
            <SearchBox>Search ...<Stroke w={11} h={11} d="M6.800 1A3.200 3.200 0 1 1 6.700 1M4.500 6.500L.800 10.200" c="#aaa" s={1.2} /></SearchBox>
          </AddressBar>

          <Panes>
            <NavPane>
              {NAV_ITEMS.map((shape, n) => (
                <NavItem key={n} $h={n === 0 ? 33 : undefined}>
                  {shape ? (
                    <>
                      <NavChevron>{(n === 1 || n === 2) && <Stroke w={6} h={10} d="M1 1L5 5 1 9" c="#777" s={1.3} />}</NavChevron>
                      <svg width="5" height="15" viewBox="0 0 5 15">{shape}</svg>
                    </>
                  ) : <NavRule />}
                </NavItem>
              ))}
            </NavPane>
            <NavTrack><NavThumb /></NavTrack>
            <Splitter />
            <FilePane>
              <HeadRow><span>Name</span><Stroke w={9} h={8} d="M1 5.500L4.500 2 8 5.500" c="#8a8a8a" /></HeadRow>
              <FileRow $ls={-0.21}><FileIcon kind="plain" />DSRevitNodesUI.Categories.dyn</FileRow>
              <FileRow $ls={-0.21}><FileIcon kind="md" />DSRevitNodesUI.Categories.md</FileRow>
              <FileRow $ls={-0.12}><FileIcon kind="img" />DSRevitNodesUI.Categories_img.jpg</FileRow>
              <HTrack><HThumb /></HTrack>
            </FilePane>
          </Panes>

          <StatusBar>
            <StatusText>3 items</StatusText>
            <StatusRule />
            <ViewButton $on><svg width="16" height="17" viewBox="0 0 16 17"><rect width="16" height="17" rx="1.500" fill="#c9c9c9" /><path d="M2.500 3.500H13.500M2.500 6.500H13.500M2.500 9.500H13.500M2.500 13.500H13.500" stroke="#333" /></svg></ViewButton>
            <ViewButton><svg width="16" height="16" viewBox="0 0 16 16"><rect width="16" height="16" rx="1.500" fill="#c9c9c9" /><path d="M2.500 2.500H13.500V11.500H2.500Z" fill="#fff" stroke="#333" /><path d="M2 13.500H14" stroke="#333" /></svg></ViewButton>
          </StatusBar>
        </ExplorerClip>
      </Explorer>
    </Page>
  );
}
